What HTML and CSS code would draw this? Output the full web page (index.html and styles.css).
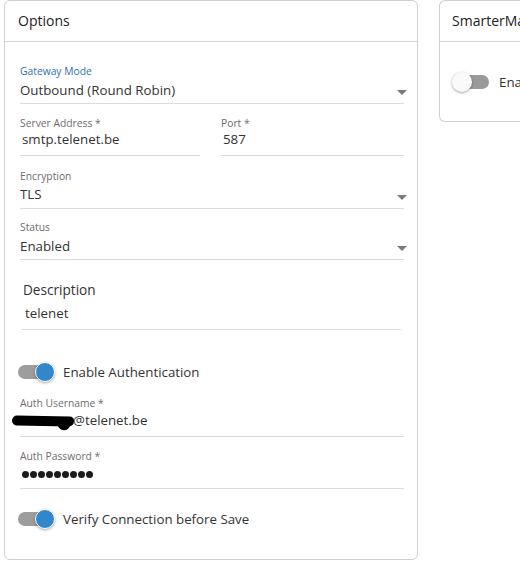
FILE: index.html
```html
<!DOCTYPE html>
<html>
<head>
<meta charset="utf-8">
<link rel="stylesheet" href="styles.css">
</head>
<body>
<div class="page">
  <section class="card card-options">
    <header class="card-head">Options</header>
    <div class="card-body">
      <div class="field select f-gateway">
        <div class="label label-focus">Gateway Mode</div>
        <div class="value">Outbound (Round Robin)</div>
        <span class="arrow"></span>
      </div>
      <div class="row f-server">
        <div class="field text">
          <div class="label">Server Address *</div>
          <div class="value indent">smtp.telenet.be</div>
        </div>
        <div class="field text">
          <div class="label">Port *</div>
          <div class="value indent">587</div>
        </div>
      </div>
      <div class="field select f-enc">
        <div class="label">Encryption</div>
        <div class="value">TLS</div>
        <span class="arrow"></span>
      </div>
      <div class="field select f-status">
        <div class="label">Status</div>
        <div class="value">Enabled</div>
        <span class="arrow"></span>
      </div>
      <div class="field desc f-desc">
        <div class="label-big">Description</div>
        <div class="value indent">telenet</div>
      </div>
      <div class="toggle-row f-auth">
        <span class="switch on"><span class="track"></span><span class="knob"></span></span>
        <span class="toggle-label">Enable Authentication</span>
      </div>
      <div class="field text f-user">
        <div class="label">Auth Username *</div>
        <div class="value"><span class="redact"></span><span class="user-text">@telenet.be</span></div>
      </div>
      <div class="field text f-pass">
        <div class="label">Auth Password *</div>
        <div class="value indent dots"><i></i><i></i><i></i><i></i><i></i><i></i><i></i><i></i><i></i></div>
      </div>
      <div class="toggle-row f-verify">
        <span class="switch on"><span class="track"></span><span class="knob"></span></span>
        <span class="toggle-label">Verify Connection before Save</span>
      </div>
    </div>
  </section>
  <section class="card card-smarter">
    <header class="card-head">SmarterMail</header>
    <div class="card-body body-smarter">
      <div class="toggle-row">
        <span class="switch off"><span class="track"></span><span class="knob"></span></span>
        <span class="toggle-label">Enable</span>
      </div>
    </div>
  </section>
</div>
</body>
</html>
```

FILE: styles.css
```css
* { box-sizing: border-box; }
html, body { margin: 0; padding: 0; background: #fff; }
body {
  font-family: "Open Sans", "Noto Sans", sans-serif;
  color: #333;
  width: 520px;
  height: 566px;
  overflow: hidden;
}
.page {
  display: flex;
  align-items: flex-start;
  gap: 21px;
  padding-left: 4px;
}
.card {
  border: 1px solid #cfcfcf;
  border-radius: 6px;
  background: #fff;
  flex-shrink: 0;
}
.card-options { width: 414px; height: 560px; }
.card-smarter { width: 120px; height: 122px; border-right: none; border-radius: 6px 0 0 6px; white-space: nowrap; overflow: hidden; }
.card-head {
  height: 41px;
  border-bottom: 1px solid #d6d6d6;
  font-size: 14px;
  line-height: 40px;
  padding-left: 13px;
  color: #222;
}
.card-smarter .card-head { padding-left: 12px; }
.card-body {
  display: flex;
  flex-direction: column;
  padding: 0 13px 0 15px;
}
.field { position: relative; border-bottom: 1px solid #dcdcdc; }
.label {
  font-size: 10.3px;
  line-height: 14px;
  height: 14px;
  color: #6e6e6e;
}
.label-focus { color: #2f6fb3; }
.label-big { font-size: 13.6px; line-height: 20px; color: #333; }
.value {
  font-size: 13.3px;
  line-height: 20px;
  height: 20px;
  color: #333;
  white-space: nowrap;
}
.indent { padding-left: 2px; }
.arrow {
  position: absolute;
  right: -3px;
  top: 26px;
  width: 0; height: 0;
  border-left: 5px solid transparent;
  border-right: 5px solid transparent;
  border-top: 5px solid #7a7a7a;
}
.row {
  display: grid;
  grid-template-columns: 180px 1fr;
  column-gap: 21px;
}
.f-gateway { margin-top: 22px; padding-bottom: 3px; }
.f-gateway .value { margin-top: 2px; }
.f-server { margin-top: 12px; }
.f-server .field { padding-bottom: 6px; }
.f-server .value { margin-top: -1px; }
.f-enc { margin-top: 13px; padding-bottom: 4px; }
.f-enc .value { margin-top: 1px; }
.f-status { margin-top: 11px; padding-bottom: 3px; }
.f-status .value { margin-top: 2px; }
.f-desc { margin: 20px 3px 0 2px; padding-bottom: 6px; padding-left: 1px; }
.f-desc .value { margin-top: 3px; }
.f-auth { margin-top: 31px; }
.f-user { margin-top: 13px; padding-bottom: 6px; }
.f-user .value { position: relative; }
.f-pass { margin-top: 12px; padding-bottom: 4px; }
.f-pass .value { margin-top: 1px; }
.f-verify { margin-top: 19px; }

.redact {
  position: absolute;
  left: -8px;
  top: 6px;
  width: 62px;
  height: 10px;
  background: #000;
  border-radius: 6px 5px 6px 6px;
  transform: rotate(1deg);
}
.redact::after {
  content: "";
  position: absolute;
  right: 4px;
  top: 2px;
  width: 12px;
  height: 12px;
  background: #000;
  border-radius: 50%;
}
.user-text { margin-left: 53px; }

.dots { display: flex; align-items: center; gap: 1px; }
.dots i {
  display: block;
  width: 7px; height: 7px;
  border-radius: 50%;
  background: #1a1a1a;
}

.toggle-row {
  display: flex;
  align-items: center;
  height: 22px;
  margin-left: -2px;
}
.switch {
  position: relative;
  width: 37px;
  height: 22px;
  flex-shrink: 0;
}
.track {
  position: absolute;
  top: 4px;
  width: 33px;
  height: 14px;
  border-radius: 7px;
  background: #9d9d9d;
}
.knob {
  position: absolute;
  top: 1px;
  width: 20px;
  height: 20px;
  border-radius: 50%;
  box-shadow: 0 1px 3px rgba(0,0,0,0.35);
}
.switch.on .track { left: 0; }
.switch.on .knob { left: 17px; background: #3187ca; border: 1.5px solid #fff; }
.switch.off .track { left: 4px; background: #9a9a9a; }
.switch.off .knob { left: 0; background: #fafafa; }
.toggle-label { font-size: 13.3px; color: #333; margin-left: 8px; white-space: nowrap; }
.body-smarter { padding: 29px 0 0 12px; }
.body-smarter .toggle-row { margin-left: 0; }
.body-smarter .toggle-label { margin-left: 10px; }
```
